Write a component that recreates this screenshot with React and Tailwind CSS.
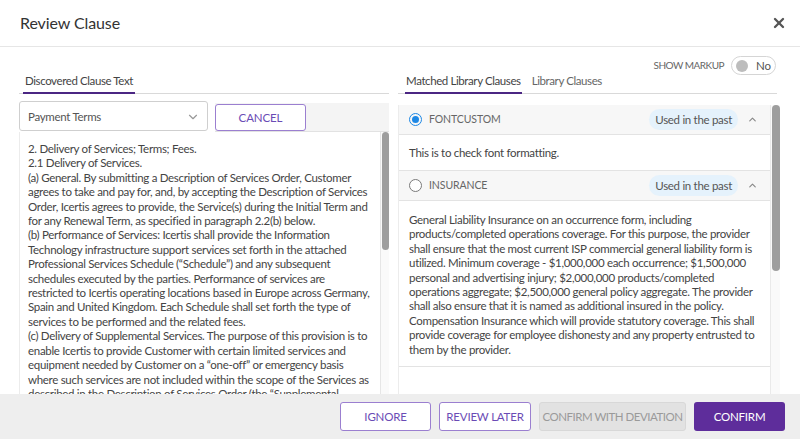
import { ChevronDown, ChevronUp, X } from 'lucide-react';

const clauseLines = [
    '2. Delivery of Services; Terms; Fees.',
    '2.1 Delivery of Services.',
    '(a) General. By submitting a Description of Services Order, Customer',
    'agrees to take and pay for, and, by accepting the Description of Services',
    'Order, Icertis agrees to provide, the Service(s) during the Initial Term and',
    'for any Renewal Term, as specified in paragraph 2.2(b) below.',
    '(b) Performance of Services: Icertis shall provide the Information',
    'Technology infrastructure support services set forth in the attached',
    'Professional Services Schedule (“Schedule”) and any subsequent',
    'schedules executed by the parties. Performance of services are',
    'restricted to Icertis operating locations based in Europe across Germany,',
    'Spain and United Kingdom. Each Schedule shall set forth the type of',
    'services to be performed and the related fees.',
    '(c) Delivery of Supplemental Services. The purpose of this provision is to',
    'enable Icertis to provide Customer with certain limited services and',
    'equipment needed by Customer on a “one-off” or emergency basis',
    'where such services are not included within the scope of the Services as',
    'described in the Description of Services Order (the “Supplemental',
    'Services”).',
];

const insuranceLines = [
    'General Liability Insurance on an occurrence form, including',
    'products/completed operations coverage. For this purpose, the provider',
    'shall ensure that the most current ISP commercial general liability form is',
    'utilized. Minimum coverage - $1,000,000 each occurrence; $1,500,000',
    'personal and advertising injury; $2,000,000 products/completed',
    'operations aggregate; $2,500,000 general policy aggregate. The provider',
    'shall also ensure that it is named as additional insured in the policy.',
    'Compensation Insurance which will provide statutory coverage. This shall',
    'provide coverage for employee dishonesty and any property entrusted to',
    'them by the provider.',
];

const ClauseHeader = ({ title, selected }) => (
    <div className="flex items-center h-[30px] bg-[#f7f7f7] border-b border-[#e3e3e3] pl-[10px] pr-[12px]">
        {selected ? (
            <span className="w-[13px] h-[13px] rounded-full border-[1.5px] border-[#1e88e5] flex items-center justify-center">
                <span className="w-[7px] h-[7px] rounded-full bg-[#1e88e5]" />
            </span>
        ) : (
            <span className="w-[13px] h-[13px] rounded-full border-[1.5px] border-[#7a7a7a] bg-white" />
        )}
        <span className="ml-[7px] text-[10.5px] text-[#666] tracking-[-0.1px]">{title}</span>
        <span className="ml-auto h-[21px] px-[6px] rounded-full bg-[#e5f2fc] text-[11.5px] tracking-[-0.3px] text-[#555] leading-[21px]">Used in the past</span>
        <ChevronUp size={11} strokeWidth={2.5} className="ml-[9px] text-[#888]" />
    </div>
);

const App = () => {
    return (
        <div className="w-[800px] h-[439px] bg-white flex flex-col overflow-hidden text-[#444]" style={{ fontFamily: 'Lato, "Open Sans", sans-serif' }}>
            {/* header */}
            <div className="h-[47px] flex items-center justify-between pl-[20px] pr-[13px] border-b border-[#e6e6e6]">
                <h1 className="text-[16px] text-[#333] tracking-[-0.1px]">Review Clause</h1>
                <X size={16} strokeWidth={3.5} className="text-[#555]" />
            </div>

            <div className="flex-1 flex px-[19px] gap-[9px] min-h-0">
                {/* discovered clause */}
                <div className="w-[372px] flex flex-col min-h-0">
                    <div className="h-[26px]" />
                    <div className="flex border-b border-[#d9d9d9]">
                        <div className="ml-[4px] px-[2px] pt-[1px] pb-[4px] leading-[14px] text-[11.5px] tracking-[-0.4px] text-[#444] border-b-2 border-[#4b2683] -mb-px">Discovered Clause Text</div>
                    </div>
                    <div className="flex items-start mt-[7px]">
                        <div className="w-[189px] h-[30px] border border-[#cfcfcf] rounded-[3px] bg-white flex items-center justify-between pl-[8px] pr-[7px] pt-[1px] text-[11.5px] tracking-[-0.3px] text-[#555]">
                            Payment Terms
                            <ChevronDown size={14} strokeWidth={2} className="text-[#999]" />
                        </div>
                        <div className="flex-1 ml-[7px] mt-[2px] h-[29px] bg-[#f4f4f4] border-b border-[#e2e2e2] flex items-start">
                            <button className="w-[91px] h-[27px] mt-[1px] bg-white border border-[#9b7fd0] rounded-[3px] text-[11.5px] text-[#6a4bb5] tracking-[-0.1px]">CANCEL</button>
                        </div>
                    </div>
                    <div className="flex-1 flex min-h-0 border-l border-[#ececec]">
                        <div className="flex-1 overflow-hidden pl-[8px] pt-[10px] text-[11.5px] tracking-[-0.3px] leading-[14.4px] text-[#444]">
                            {clauseLines.map((line, i) => (
                                <div key={i} className="whitespace-nowrap">{line}</div>
                            ))}
                        </div>
                        <div className="w-[9px] border-l border-[#e6e6e6] bg-[#fafafa] flex justify-center">
                            <div className="w-[7px] h-[118px] rounded-full bg-[#9e9e9e]" />
                        </div>
                    </div>
                </div>

                {/* matched library clauses */}
                <div className="w-[385px] flex flex-col min-h-0">
                    <div className="h-[26px] flex items-end justify-end pr-[5px]">
                        <div className="flex items-center -mb-[2px]">
                            <span className="text-[10px] tracking-[-0.5px] text-[#666] mr-[7px]">SHOW MARKUP</span>
                            <div className="w-[45px] h-[19px] rounded-full border border-[#d5d5d5] bg-white flex items-center pl-[4px]">
                                <span className="w-[12px] h-[12px] rounded-full bg-[#bdbdbd]" />
                                <span className="ml-[8px] text-[11.5px] tracking-[-0.2px] text-[#555]">No</span>
                            </div>
                        </div>
                    </div>
                    <div className="flex border-b border-[#d9d9d9] mr-[4px] items-end">
                        <div className="ml-[7px] px-[1px] pt-[1px] pb-[4px] leading-[14px] text-[11.5px] tracking-[-0.4px] text-[#444] border-b-2 border-[#4b2683] -mb-px">Matched Library Clauses</div>
                        <div className="ml-[10px] pt-[1px] pb-[5px] leading-[14px] text-[11.5px] tracking-[-0.4px] text-[#666]">Library Clauses</div>
                    </div>
                    <div className="flex-1 flex mt-[11px] min-h-0">
                        <div className="w-[372px] flex flex-col border-l border-[#ececec]">
                            <ClauseHeader title="FONTCUSTOM" selected />
                            <div className="h-[36px] border-b border-[#e3e3e3] pl-[10px] flex items-center text-[11.5px] tracking-[-0.3px] text-[#444]">This is to check font formatting.</div>
                            <ClauseHeader title="INSURANCE" />
                            <div className="pl-[10px] pt-[12px] pb-[9px] border-b border-[#e3e3e3] text-[11.5px] tracking-[-0.3px] leading-[14.4px] text-[#444]">
                                {insuranceLines.map((line, i) => (
                                    <div key={i} className="whitespace-nowrap">{line}</div>
                                ))}
                            </div>
                        </div>
                        <div className="w-[10px] bg-[#fafafa] border-l border-[#eaeaea] flex justify-center">
                            <div className="w-[8px] h-[166px] rounded-full bg-[#9e9e9e]" />
                        </div>
                    </div>
                </div>
            </div>

            {/* footer */}
            <div className="h-[45px] bg-[#eeeeee] flex items-start justify-end gap-[8px] pt-[8px] pr-[15px] text-[11.5px] tracking-[-0.2px] whitespace-nowrap">
                <button className="w-[91px] h-[29px] bg-white border border-[#9b7fd0] rounded-[3px] text-[#6a4bb5]">IGNORE</button>
                <button className="w-[92px] h-[29px] bg-white border border-[#9b7fd0] rounded-[3px] text-[#6a4bb5]">REVIEW LATER</button>
                <button className="w-[147px] h-[29px] bg-[#e2e2e2] border border-[#d8d8d8] rounded-[3px] text-[#9a9a9a] tracking-[-0.5px]">CONFIRM WITH DEVIATION</button>
                <button className="w-[91px] h-[29px] bg-[#5e2d9b] rounded-[3px] text-white">CONFIRM</button>
            </div>
        </div>
    );
};

export default App;
